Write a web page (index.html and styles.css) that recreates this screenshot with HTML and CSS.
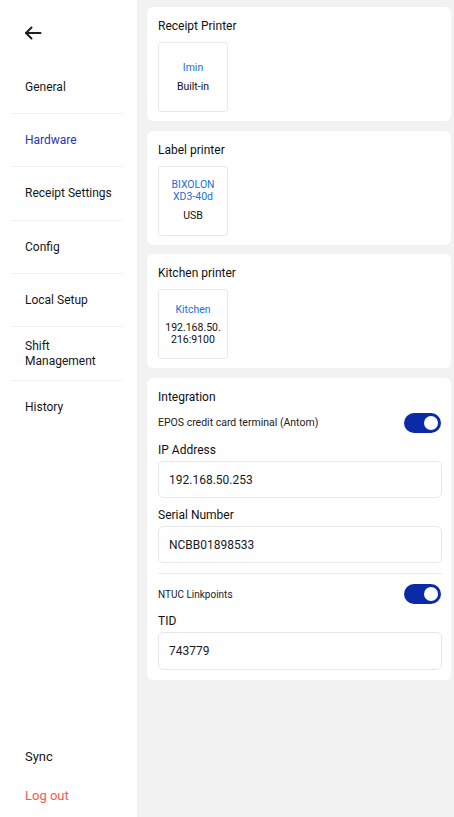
FILE: index.html
```html
<!DOCTYPE html>
<html lang="en">
<head>
    <meta charset="UTF-8">
    <meta name="viewport" content="width=device-width, initial-scale=1.0">
    <title>Settings - Hardware</title>
    <link rel="stylesheet" href="styles.css">
</head>
<body>
    <div class="app">
        <aside class="sidebar">
            <div class="back">
                <svg width="18" height="14" viewBox="0 0 18 14" fill="none" stroke="#1f1f1f" stroke-width="2" stroke-linecap="round" stroke-linejoin="round">
                    <path d="M16.5 7H2"/>
                    <path d="M7.5 1.5L2 7l5.5 5.5"/>
                </svg>
            </div>
            <nav class="menu">
                <div class="menu-item">General</div>
                <div class="menu-item active">Hardware</div>
                <div class="menu-item">Receipt Settings</div>
                <div class="menu-item">Config</div>
                <div class="menu-item">Local Setup</div>
                <div class="menu-item">Shift<br>Management</div>
                <div class="menu-item last">History</div>
            </nav>
            <div class="sidebar-foot">
                <div class="foot-item">Sync</div>
                <div class="foot-item logout">Log out</div>
            </div>
        </aside>

        <main class="content">
            <section class="card">
                <h3 class="card-title">Receipt Printer</h3>
                <div class="printer">
                    <div class="printer-name">Imin</div>
                    <div class="printer-conn">Built-in</div>
                </div>
            </section>

            <section class="card">
                <h3 class="card-title">Label printer</h3>
                <div class="printer">
                    <div class="printer-name tight">BIXOLON<br>XD3-40d</div>
                    <div class="printer-conn">USB</div>
                </div>
            </section>

            <section class="card">
                <h3 class="card-title">Kitchen printer</h3>
                <div class="printer">
                    <div class="printer-name">Kitchen</div>
                    <div class="printer-conn tight">192.168.50.<wbr>216:9100</div>
                </div>
            </section>

            <section class="card integration">
                <h3 class="card-title">Integration</h3>
                <div class="switch-row">
                    <span class="switch-label">EPOS credit card terminal (Antom)</span>
                    <span class="switch on"><span class="knob"></span></span>
                </div>
                <label class="field-label">IP Address</label>
                <div class="field">192.168.50.253</div>
                <label class="field-label">Serial Number</label>
                <div class="field">NCBB01898533</div>
                <div class="divider"></div>
                <div class="switch-row">
                    <span class="switch-label small">NTUC Linkpoints</span>
                    <span class="switch on"><span class="knob"></span></span>
                </div>
                <label class="field-label">TID</label>
                <div class="field">743779</div>
            </section>
        </main>
    </div>
</body>
</html>
```

FILE: styles.css
```css
* {
    box-sizing: border-box;
}
html, body {
    margin: 0;
    height: 100%;
}
body {
    font-family: Roboto, "Noto Sans", Arial, sans-serif;
    color: #1f1f1f;
    background-color: #f2f2f2;
}
.app {
    display: flex;
    height: 817px;
}

/* sidebar */
.sidebar {
    width: 137px;
    flex-shrink: 0;
    background: #fff;
    display: flex;
    flex-direction: column;
    padding: 0 14px 2px 11px;
}
.back {
    height: 60px;
    display: flex;
    align-items: center;
    padding-left: 13px;
    padding-top: 6px;
}
.menu-item {
    height: 53.33px;
    display: flex;
    align-items: center;
    padding-left: 14px;
    padding-top: 1px;
    font-size: 12px;
    line-height: 15px;
    color: #161616;
    border-bottom: 1px solid #f0f0f0;
}
.menu-item:first-child {
    height: 54px;
}
.menu-item.last {
    border-bottom: none;
}
.menu-item.active {
    color: #2a36b1;
}
.sidebar-foot {
    margin-top: auto;
}
.foot-item {
    height: 39px;
    display: flex;
    align-items: center;
    padding-left: 14px;
    font-size: 13px;
    color: #161616;
}
.foot-item.logout {
    color: #f25a4f;
}

/* content */
.content {
    flex: 1;
    padding: 7px 3px 0 10px;
    display: flex;
    flex-direction: column;
    gap: 9.67px;
}
.card {
    background: #fff;
    border-radius: 6px;
    padding: 12px 9px 9px 11px;
}
.card-title {
    margin: 0;
    font-size: 12px;
    line-height: 15px;
    font-weight: 400;
    color: #111;
}
.printer {
    width: 70px;
    height: 70px;
    margin-top: 8px;
    border: 1px solid #e6e9ee;
    border-radius: 3px;
    display: flex;
    flex-direction: column;
    align-items: center;
    justify-content: center;
    text-align: center;
    padding: 0 4px;
}
.printer-name {
    font-size: 10.5px;
    line-height: 14px;
    color: #1f6fd6;
}
.printer-conn {
    margin-top: 5px;
    font-size: 10.5px;
    line-height: 14px;
    color: #111;
}
.printer-name.tight {
    line-height: 12.5px;
}
.printer-conn.tight {
    line-height: 12px;
}

/* integration */
.integration {
    padding-bottom: 10px;
}
.switch-row {
    margin-top: 8px;
    height: 20px;
    display: flex;
    align-items: center;
    justify-content: space-between;
}
.switch-label {
    font-size: 10.5px;
    color: #222;
}
.switch-label.small {
    font-size: 10px;
}
.switch {
    width: 37px;
    height: 20px;
    border-radius: 10px;
    background: #0b2aa8;
    position: relative;
    margin-right: 1px;
}
.knob {
    position: absolute;
    top: 3px;
    right: 3px;
    width: 14px;
    height: 14px;
    border-radius: 50%;
    background: #fff;
}
.field-label {
    display: block;
    margin-top: 9.5px;
    font-size: 12px;
    line-height: 15px;
    color: #111;
}
.switch-row + .field-label {
    margin-top: 10px;
}
.field {
    margin-top: 3px;
    height: 37.5px;
    border: 1px solid #e6e8ec;
    border-radius: 5px;
    padding: 0 10px;
    display: flex;
    align-items: center;
    font-size: 12px;
    color: #1a1a1a;
}
.divider {
    margin-top: 10px;
    height: 1px;
    background: #eaeaea;
}
.divider + .switch-row {
    margin-top: 10px;
}
.field:last-child {
    height: 38px;
}
```
